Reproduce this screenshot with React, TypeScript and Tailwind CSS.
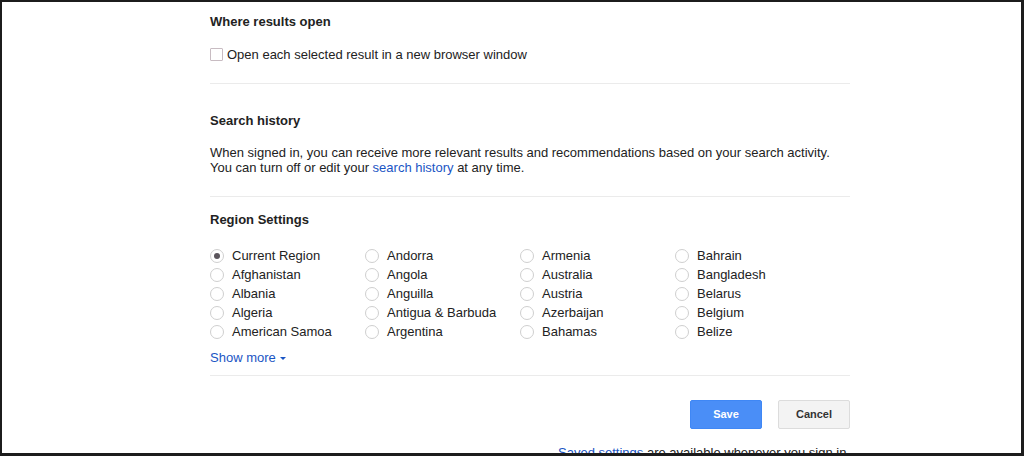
const columns: string[][] = [
  ["Current Region", "Afghanistan", "Albania", "Algeria", "American Samoa"],
  ["Andorra", "Angola", "Anguilla", "Antigua & Barbuda", "Argentina"],
  ["Armenia", "Australia", "Austria", "Azerbaijan", "Bahamas"],
  ["Bahrain", "Bangladesh", "Belarus", "Belgium", "Belize"],
];

function Radio({ checked }: { checked?: boolean }) {
  return (
    <span className="flex h-[14px] w-[14px] shrink-0 items-center justify-center rounded-full border border-[#cfcfcf] bg-white">
      {checked && <span className="h-[6px] w-[6px] rounded-full bg-[#5b555c]" />}
    </span>
  );
}

function Divider({ className }: { className: string }) {
  return <div className={"h-px w-full bg-[#ebebeb] " + className} />;
}

export default function App() {
  return (
    <div
      className="h-[456px] w-[1024px] overflow-hidden border-t-2 border-l-2 border-r-[3px] border-b-[3px] border-[#1c1c1c] bg-white text-[13px] leading-[15px] text-[#222]"
      style={{ fontFamily: '"Liberation Sans", Arial, sans-serif' }}
    >
      <div className="ml-[208px] w-[640px] pt-[12px]">
        <h2 className="font-bold">Where results open</h2>
        <label className="mt-[18px] flex items-center">
          <span className="h-[13px] w-[13px] rounded-[1px] border border-[#c8bcc2] bg-white" />
          <span className="ml-[4px]">Open each selected result in a new browser window</span>
        </label>
        <Divider className="mt-[21px]" />

        <h2 className="mt-[29px] font-bold">Search history</h2>
        <p className="mt-[17px]">
          When signed in, you can receive more relevant results and recommendations based on your search activity.
          <br />
          You can turn off or edit your <a className="text-[#1a55c4]">search history</a> at any time.
        </p>
        <Divider className="mt-[21px]" />

        <h2 className="mt-[15px] font-bold">Region Settings</h2>
        <div className="mt-[19px] flex">
          {columns.map((col, ci) => (
            <div key={ci} className="w-[155px]">
              {col.map((name, ri) => (
                <div key={name} className="flex h-[19px] items-center">
                  <Radio checked={ci === 0 && ri === 0} />
                  <span className="ml-[8px]">{name}</span>
                </div>
              ))}
            </div>
          ))}
        </div>
        <div className="mt-[9px] flex items-center text-[#1a55c4]">
          <span>Show more</span>
          <span className="ml-[4px] mt-[1px] h-0 w-0 border-x-[3px] border-t-[3px] border-x-transparent border-t-[#1a55c4]" />
        </div>
        <Divider className="mt-[10px]" />

        <div className="mt-[24px] flex justify-end gap-[16px]">
          <button className="h-[29px] w-[72px] rounded-[2px] border border-[#3f87f5] bg-[#4a8ef7] text-[11px] font-bold text-white">
            Save
          </button>
          <button className="h-[29px] w-[72px] rounded-[2px] border border-[#dcdcdc] bg-[#f3f3f3] text-[11px] font-bold text-[#333]">
            Cancel
          </button>
        </div>
        <p className="mt-[16px] text-right">
          <a className="text-[#1a55c4]">Saved settings</a> are available whenever you sign in.
        </p>
      </div>
    </div>
  );
}
